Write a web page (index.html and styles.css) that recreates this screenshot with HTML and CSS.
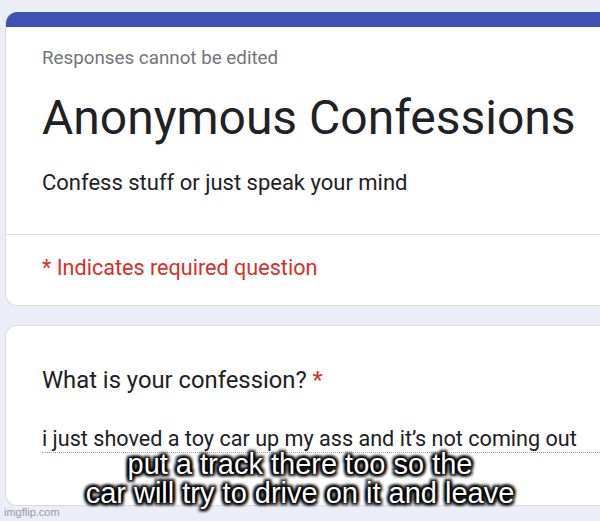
FILE: index.html
```html
<!DOCTYPE html>
<html>
<head>
<meta charset="utf-8">
<link rel="stylesheet" href="styles.css">
</head>
<body>
<div class="page">
  <div class="card head-card">
    <div class="accent"></div>
    <div class="head-main">
      <div class="note">Responses cannot be edited</div>
      <div class="title">Anonymous Confessions</div>
      <div class="desc">Confess stuff or just speak your mind</div>
    </div>
    <div class="req">* Indicates required question</div>
  </div>
  <div class="card q-card">
    <div class="question">What is your confession? <span class="star">*</span></div>
    <div class="answer">i just shoved a toy car up my ass and it’s not coming out</div>
  </div>
  <div class="caption">put a track there too so the<br>car will try to drive on it and leave</div>
  <div class="wm">imgflip.com</div>
</div>
</body>
</html>
```
FILE: styles.css
```css
html, body { margin: 0; padding: 0; }
body {
  width: 600px;
  height: 521px;
  overflow: hidden;
  background: #ebedf7;
  font-family: Roboto, "Liberation Sans", sans-serif;
}
.page {
  position: relative;
  padding: 12px 0 0 5px;
}
.card {
  background: #fff;
  border: 1px solid #dadce0;
  border-right: none;
  border-radius: 12px 0 0 12px;
  margin-right: -20px;
}
.head-card {
  height: 294px;
  box-sizing: border-box;
  border-top: none;
  overflow: hidden;
}
.accent {
  height: 15px;
  background: #3f51b5;
  margin-left: -1px;
}
.head-main {
  padding: 19px 0 0 36px;
  height: 208px;
  box-sizing: border-box;
  border-bottom: 1px solid #dadce0;
}
.note {
  font-size: 18.8px;
  color: #70757a;
  line-height: 24px;
}
.title {
  font-size: 48px;
  color: #202124;
  line-height: 56px;
  margin-top: 20px;
}
.desc {
  font-size: 22px;
  color: #202124;
  line-height: 28px;
  margin-top: 23px;
}
.req {
  padding: 20px 0 0 36px;
  font-size: 21.6px;
  color: #d93025;
  line-height: 26px;
}
.q-card {
  margin-top: 19px;
  height: 181px;
  box-sizing: border-box;
  padding: 40px 0 0 36px;
}
.question {
  font-size: 23.8px;
  color: #202124;
  line-height: 28px;
}
.star { color: #d93025; }
.answer {
  margin-top: 32px;
  font-size: 21.6px;
  color: #202124;
  line-height: 26px;
  width: 560px;
  border-bottom: 1px dotted #9aa0a6;
  white-space: nowrap;
}
.caption {
  position: absolute;
  left: 0;
  right: 0;
  top: 450px;
  text-align: center;
  font-family: "Liberation Sans", Arial, sans-serif;
  font-size: 29px;
  line-height: 29px;
  color: #fff;
  text-shadow: 0 0 2px #000, 0 0 3px #000, 0 0 4px #000, 0 0 5px #000, 2px 2px 3px #000, -2px -2px 3px #000, 2px -2px 3px #000, -2px 2px 3px #000;
}
.wm {
  position: absolute;
  left: 4px;
  top: 506px;
  font-family: "Liberation Sans", Arial, sans-serif;
  font-size: 11px;
  color: #9a9ca3;
}
```
